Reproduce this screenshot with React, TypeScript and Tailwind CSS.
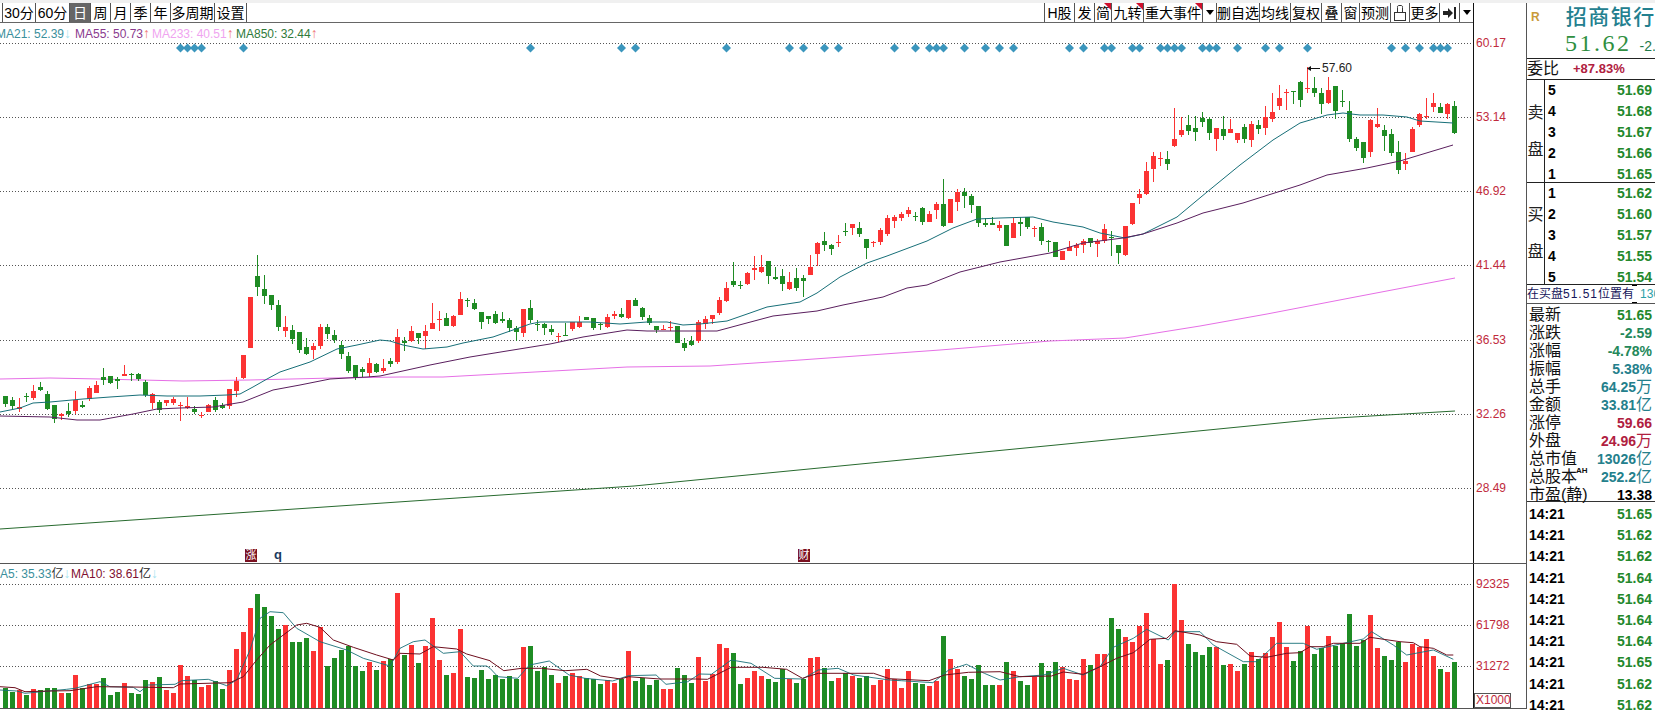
import React from 'react';

type Candle = [string, number, number, number, number];
type Pt = [number, number];

const RED = '#fb3333';
const GREEN = '#1f8c24';

// body top, body bottom, high, low, read off the screen in 3x pixels
const seg0: Candle[] = [
  ['g',168,192,168,200],['g',180,197,172,208],['r',202,208,175,215],['g',167,172,160,185],['r',153,173,135,180],
  ['g',140,150,126,153],['g',162,208,153,210],['g',195,236,195,248],['r',222,228,218,240],['g',213,222,190,230],
  ['r',179,213,153,222],['g',196,200,183,205],['r',144,178,138,182],['r',135,158,124,160],['g',111,120,84,135],
  ['g',108,130,108,131],['g',118,122,110,146],['r',102,107,75,107],['g',103,106,98,122],['g',102,117,100,124],
  ['g',125,165,120,172],['r',162,188,160,207],['g',185,210,180,218],['r',181,188,180,198],['r',176,189,170,195],
  ['r',195,198,185,242],['r',199,203,170,208],['g',206,215,198,222],['r',224,228,215,235],['r',195,215,192,216],
  ['g',180,210,172,215],['g',195,204,190,208],['r',148,198,148,208],['r',122,152,112,172],
];
const seg1: Candle[] = [
  ['r',315,385,315,388],['r',140,294,140,294],['g',78,110,15,137],['g',117,137,75,162],['g',134,165,134,180],
  ['g',165,230,150,242],['r',231,243,198,262],['g',240,267,225,282],['g',245,300,245,308],['g',292,312,265,316],
  ['r',288,299,280,328],['r',231,288,223,296],['g',232,252,222,268],['g',255,270,240,280],['g',285,312,272,328],
  ['g',318,362,305,370],['g',345,381,345,390],['g',358,365,350,380],['r',339,370,325,380],['g',342,366,338,368],
  ['r',354,363,327,370],['g',332,342,325,350],['r',262,336,238,342],['g',272,278,262,302],['r',244,272,228,276],
  ['g',250,263,250,282],['r',243,258,225,298],['r',219,236,160,238],['r',207,209,184,242],['g',205,227,190,228],
  ['r',198,228,195,230],['r',148,194,127,194],['g',150,153,145,170],['g',160,178,148,180],['g',187,217,187,237],
  ['g',199,206,197,222],['g',192,219,184,222],['g',208,214,186,218],['g',211,233,205,245],['g',235,247,228,272],
  ['r',178,250,178,262],['g',175,209,151,218],['g',222,224,210,243],['g',222,233,218,254],['g',238,245,226,256],
  ['r',257,260,250,275],['g',256,258,218,258],['r',217,236,215,242],['r',216,230,198,234],['g',202,209,201,210],
  ['g',204,233,203,240],['g',222,226,218,240],['r',202,231,193,233],['r',193,197,183,207],['g',192,202,175,205],
  ['r',151,204,151,207],['g',149,167,145,168],['g',174,201,170,210],['g',205,218,195,225],['g',229,240,228,248],
  ['r',238,240,226,240],['r',231,234,213,243],['g',228,278,228,280],['g',279,293,265,302],['g',274,285,257,288],
  ['r',216,273,210,278],
];
const seg2: Candle[] = [
  ['r',447,463,437,477],['r',434,447,434,462],['r',390,430,382,435],['r',354,392,336,395],['g',334,345,277,350],
  ['g',346,348,332,357],['r',309,342,305,345],['r',295,299,258,330],['r',292,305,255,310],['g',274,317,274,342],
  ['g',320,326,292,330],['g',319,341,298,362],['r',337,357,307,360],['g',325,354,294,362],['g',324,332,315,380],
  ['r',291,315,255,315],['r',219,251,215,287],['g',214,224,186,242],['g',225,236,222,254],['r',215,218,195,232],
  ['g',183,185,160,197],['r',163,173,162,194],['g',174,191,156,200],['g',208,234,208,266],['r',215,217,212,230],
  ['r',181,216,175,224],['r',144,192,136,197],['r',141,152,135,173],['r',132,145,125,152],['r',120,132,112,140],
  ['g',137,140,125,152],['g',114,156,112,166],['r',132,155,122,156],['r',102,120,97,146],['g',102,168,28,172],
  ['r',87,159,87,160],['r',65,95,57,122],['g',66,77,55,113],['g',78,104,72,128],['g',108,158,108,172],
  ['g',159,164,143,172],['g',160,164,140,165],['r',165,174,152,182],['g',165,228,165,228],['r',159,204,145,204],
  ['g',157,161,140,197],['g',142,170,142,178],['r',174,177,168,202],['g',171,213,160,225],['g',213,217,210,245],
  ['g',217,262,217,262],['r',244,270,244,270],['r',232,243,212,243],['r',226,233,220,258],['r',214,224,206,248],
  ['g',205,220,205,232],['r',214,221,208,262],['r',177,213,163,220],['g',200,205,183,258],['g',226,248,226,282],
];
const seg3: Candle[] = [
  ['r',498,585,498,587],['r',428,492,428,495],['r',402,413,388,432],['r',333,403,305,405],['r',288,328,277,366],
  ['r',295,298,277,318],['g',297,311,272,330],['r',237,258,144,260],['r',210,224,172,232],['g',195,213,166,224],
  ['g',204,215,168,242],['g',173,185,156,200],['g',178,218,172,240],['r',205,236,205,272],['g',207,228,168,240],
  ['r',207,218,176,218],['r',218,240,218,248],['g',201,236,192,248],['r',193,240,184,260],['g',195,207,180,222],
  ['r',171,203,138,224],['r',156,177,100,186],['r',114,137,75,150],['r',96,99,88,150],['g',94,97,93,132],
  ['g',65,119,64,140],['r',84,87,22,98],['g',84,98,52,110],['g',99,132,85,162],['r',90,130,52,132],
  ['g',78,152,78,176],['g',124,126,90,140],['g',154,236,124,245],['g',238,263,232,274],['g',247,294,245,310],
  ['r',180,276,178,290],['r',192,200,144,205],['g',210,227,195,272],['g',222,278,208,288],['g',276,330,243,342],
  ['r',303,311,278,330],['r',206,275,200,275],['r',161,194,159,200],['r',169,172,114,178],['r',129,142,98,155],
  ['g',141,158,130,160],['r',131,162,130,176],['g',138,218,123,222],
];

const toReal = (list: Candle[], base: number): Candle[] =>
  list.map(([c, a, b, h, l]) => [c, base + a / 3, base + b / 3, base + h / 3, base + l / 3]);
const candles: Candle[] = [...toReal(seg0, 340), ...toReal(seg1, 250), ...toReal(seg2, 170), ...toReal(seg3, 60)];

const ma21: Pt[] = [[0,412],[20,408],[33,403],[50,402],[83,399],[110,397],[140,395],[167,396],[200,396],[227,395],[240,394],[253,387],[267,379],[280,372],[310,362],[337,349],[357,345],[380,340],[390,341],[403,345],[423,349],[447,347],[463,343],[493,337],[513,330],[530,324],[540,322],[590,322],[620,324],[647,322],[667,322],[683,325],[700,324],[727,321],[750,313],[767,307],[800,302],[817,293],[840,277],[867,263],[887,256],[927,241],[953,228],[977,219],[1000,218],[1033,217],[1053,222],[1083,227],[1100,233],[1125,238],[1143,234],[1177,217],[1207,192],[1240,165],[1273,140],[1300,123],[1327,115],[1343,113],[1360,115],[1383,115],[1407,117],[1420,121],[1453,123]];
const ma55: Pt[] = [[0,416],[50,417],[77,420],[100,420],[133,414],[157,409],[180,408],[213,407],[243,402],[273,390],[300,385],[330,379],[347,378],[367,377],[380,376],[430,365],[470,357],[513,350],[550,344],[583,337],[627,330],[647,331],[717,331],[743,324],[773,316],[817,311],[843,305],[883,297],[907,288],[927,285],[960,272],[1000,262],[1050,253],[1083,243],[1123,238],[1143,234],[1177,223],[1203,213],[1243,203],[1300,185],[1327,175],[1367,168],[1400,161],[1433,151],[1453,145]];
const ma233: Pt[] = [[0,379],[50,378],[100,379],[183,381],[250,380],[333,378],[400,377],[443,377],[627,367],[710,366],[800,360],[940,350],[1050,341],[1125,338],[1200,326],[1267,314],[1350,298],[1455,278]];
const ma850: Pt[] = [[0,529],[634,486],[1056,445],[1320,419],[1455,411]];

// volume tops, same 3x reading
const volA: [string, number][] = [['g',445],['g',455],['r',450],['g',465],['r',447],['g',450],['g',444],['g',444],['r',458],['g',458],['r',405],['g',445],['r',432],['r',432],['g',414],['g',465],['g',456],['r',429],['g',458],['g',462],['g',420],['r',426],['g',411],['r',450],['r',458],['r',375],['r',408],['g',420],['r',441],['r',435],['g',423],['g',447],['r',390],['r',327],['r',276],['r',204],['g',162],['g',201],['g',228],['g',267],['r',255],['g',306],['g',306],['g',294],['r',333],['r',262],['g',378],['g',354],['g',330],['g',318],['g',378],['g',393],['r',366],['g',390],['r',363],['g',357],['r',159],['g',345],['r',315],['g',369],['r',318],['r',234],['r',360],['g',405],['r',399],['r',267],['g',411],['g',414],['g',390],['g',417]];
const volB: [string, number][] = [['g',285],['g',297],['g',288],['g',297],['r',201],['g',198],['g',273],['g',261],['g',285],['r',309],['g',288],['r',279],['r',288],['g',294],['g',297],['g',312],['r',300],['r',309],['g',297],['r',213],['g',303],['g',294],['g',315],['g',300],['r',327],['r',327],['g',264],['g',285],['g',309],['r',231],['r',303],['r',282],['r',192],['r',204],['g',219],['g',312],['r',294],['r',273],['r',288],['g',297],['g',306],['g',267],['r',297],['g',309],['g',297],['r',234],['r',231],['g',264],['g',303],['r',294],['g',279],['r',288],['g',294],['g',288],['r',315],['r',299],['r',267],['r',296],['r',324],['r',273],['g',309],['g',312],['r',318],['r',303],['g',168],['r',237],['r',267],['g',288],['g',297],['g',255],['g',315],['g',315],['r',315],['g',246],['r',273],['g',303],['g',315],['r',291],['g',249],['g',273],['g',246],['r',261],['r',297],['r',300],['r',237],['g',255],['r',222]];
const volC: [string, number][] = [['r',282],['g',174],['g',207],['r',231],['r',246],['r',198],['r',159],['r',236],['r',312],['g',300],['r',72],['r',180],['g',252],['g',276],['g',285],['g',261],['r',261],['g',315],['r',312],['r',333],['g',312],['r',276],['g',297],['r',279],['r',231],['r',186],['r',261],['g',303],['g',273],['r',198],['g',282],['g',264],['r',228],['g',258],['g',249],['g',162],['g',258],['g',240],['r',165],['r',264],['g',288],['g',300],['g',246],['r',306],['r',252],['r',261],['r',237],['r',288],['g',327],['r',336],['g',306]];
const volumes: [string, number][] = [
  ...volA.map(([c, v]): [string, number] => [c, 540 + v / 3]),
  ...volB.map(([c, v]): [string, number] => [c, 580 + v / 3]),
  ...volC.map(([c, v]): [string, number] => [c, 560 + v / 3]),
];

const fromZoom = (pts: Pt[], ox: number, oy: number, sx = 3): Pt[] => pts.map(([x, y]) => [ox + x / sx, oy + y / 3]);

const volMa10: Pt[] = [
  ...fromZoom([[0,440],[45,443],[75,455],[150,453],[210,452],[290,440],[400,441],[520,443],[540,432],[690,428],[730,410],[770,360],[810,315],[850,285],[890,255],[920,250],[960,262],[1000,300],[1060,322],[1130,345],[1180,360],[1200,340],[1260,342],[1300,320],[1370,327],[1400,342],[1470,362]], 0, 540),
  ...fromZoom([[0,243],[35,272],[80,265],[130,265],[190,272],[245,268],[280,288],[330,297],[350,290],[430,297],[520,297],[550,298],[610,262],[690,262],[750,268],[790,295],[830,280],[970,280],[1010,296],[1110,302],[1150,285],[1210,277],[1290,275],[1340,290],[1420,288],[1450,276],[1500,283]], 490, 580, 2.529),
  ...fromZoom([[0,320],[50,295],[100,278],[150,238],[200,235],[225,212],[300,225],[350,245],[410,253],[450,288],[500,292],[560,280],[600,278],[630,260],[670,260],[700,250],[780,250],[810,232],[900,245],[940,248],[960,260],[1000,265],[1040,285],[1060,285]], 1100, 560),
];
const volMa5: Pt[] = [
  ...fromZoom([[0,450],[50,453],[75,460],[200,448],[225,445],[300,425],[330,440],[400,442],[420,455],[445,435],[525,433],[545,422],[625,418],[680,437],[710,420],[750,330],[780,235],[810,215],[850,218],[890,265],[960,305],[1040,330],[1090,355],[1170,378],[1200,325],[1240,305],[1275,300],[1330,340],[1380,335],[1420,378],[1460,378]], 0, 540),
  ...fromZoom([[0,265],[20,290],[70,295],[100,255],[150,243],[200,285],[240,295],[310,303],[350,287],[420,285],[445,313],[500,305],[530,282],[560,283],[610,240],[660,250],[720,295],[790,297],[830,270],[880,265],[920,285],[1010,300],[1040,302],[1120,308],[1160,270],[1205,253],[1250,280],[1290,300],[1340,290],[1400,285],[1450,265],[1500,285]], 490, 580, 2.529),
  ...fromZoom([[0,320],[40,262],[100,235],[140,208],[205,240],[225,215],[300,215],[340,255],[430,305],[470,305],[530,250],[610,250],[650,268],[730,250],[790,237],[815,215],[880,255],[920,285],[1000,270],[1060,298]], 1100, 560),
];

const signalBars = [25,26,27,28,34,75,88,90,103,112,114,117,119,127,130,132,133,134,137,140,142,144,152,154,157,158,161,162,165,166,167,168,171,172,173,176,180,182,186,198,200,202,204,205,206];
const priceGrid = [43, 117, 191, 265, 340, 414, 488];
const priceLabels = ['60.17', '53.14', '46.92', '41.44', '36.53', '32.26', '28.49'];
const volGrid = [584, 625, 666];
const volLabels = ['92325', '61798', '31272'];

const barX = (k: number) => 5 + 7 * k;
const line = (pts: Pt[]) => pts.map(([x, y]) => `${x.toFixed(1)},${y.toFixed(1)}`).join(' ');

function Corner() {
  return <span className="absolute top-0 right-0 w-0 h-0 border-l-[7px] border-l-transparent border-t-[7px] border-t-[#d0102c]" />;
}

function Caret() {
  return <span className="w-0 h-0 border-x-[4px] border-x-transparent border-t-[5px] border-t-black" />;
}

function ToolBtn({ w, children, active }: { w: string; children: React.ReactNode; active?: boolean }) {
  return (
    <div className={`relative flex items-center justify-center border-l border-[#555] ${w} ${active ? 'bg-[#666] text-white' : 'text-black'}`}>
      {children}
    </div>
  );
}

function Toolbar() {
  return (
    <div className="flex justify-between h-[20px] border-b border-[#666] text-[14px] leading-none">
      <div className="flex ml-[2px]">
        <ToolBtn w="w-[33px]">30分</ToolBtn>
        <ToolBtn w="w-[34px]">60分</ToolBtn>
        <ToolBtn w="w-[21px]" active>日</ToolBtn>
        <ToolBtn w="w-[20px]">周</ToolBtn>
        <ToolBtn w="w-[20px]">月</ToolBtn>
        <ToolBtn w="w-[20px]">季</ToolBtn>
        <ToolBtn w="w-[20px]">年</ToolBtn>
        <ToolBtn w="w-[44px]">多周期</ToolBtn>
        <ToolBtn w="w-[32px]">设置</ToolBtn>
        <div className="border-l border-[#555]" />
      </div>
      <div className="flex">
        <ToolBtn w="w-[30px]">H股</ToolBtn>
        <ToolBtn w="w-[20px]">发</ToolBtn>
        <ToolBtn w="w-[17px]">简<Corner /></ToolBtn>
        <ToolBtn w="w-[32px]">九转<Corner /></ToolBtn>
        <ToolBtn w="w-[59px]">重大事件<Corner /></ToolBtn>
        <ToolBtn w="w-[14px]"><Caret /></ToolBtn>
        <ToolBtn w="w-[43px]">删自选</ToolBtn>
        <ToolBtn w="w-[31px]">均线</ToolBtn>
        <ToolBtn w="w-[31px]">复权</ToolBtn>
        <ToolBtn w="w-[20px]">叠</ToolBtn>
        <ToolBtn w="w-[18px]">窗</ToolBtn>
        <ToolBtn w="w-[31px]">预测</ToolBtn>
        <ToolBtn w="w-[19px]">
          <svg width="12" height="16" viewBox="0 0 12 16" fill="none" stroke="#333" strokeWidth="1">
            <rect x="0.5" y="7.5" width="11" height="8" />
            <path d="M3.5 7.5V2.5a1.5 1.5 0 0 1 1.5-2h2a1.5 1.5 0 0 1 1.5 2v5" />
          </svg>
        </ToolBtn>
        <ToolBtn w="w-[30px]">更多</ToolBtn>
        <ToolBtn w="w-[20px]">
          <svg width="13" height="12" viewBox="0 0 13 12" fill="#222">
            <path d="M0 4h5V1l5 5-5 5V8H0z" />
            <rect x="11" y="0" width="2" height="12" />
          </svg>
        </ToolBtn>
        <ToolBtn w="w-[14px]"><Caret /></ToolBtn>
      </div>
    </div>
  );
}

function PriceChart() {
  return (
    <svg width="1473" height="540" viewBox="0 23 1473 540" className="block">
      {priceGrid.map((y) => (
        <line key={y} x1="0" x2="1473" y1={y + 0.5} y2={y + 0.5} stroke="#555" strokeDasharray="1 2" />
      ))}
      <polyline points={line(ma850)} fill="none" stroke="#276a2e" />
      <polyline points={line(ma233)} fill="none" stroke="#e66fe6" />
      {candles.map(([c, t, b, h, l], k) => {
        const fill = c === 'r' ? RED : GREEN;
        const top = Math.round(t);
        return (
          <g key={k} fill={fill} shapeRendering="crispEdges">
            <rect x={barX(k)} y={Math.round(h)} width="1" height={Math.max(1, Math.round(l) - Math.round(h))} />
            <rect x={barX(k) - 2} y={top} width="5" height={Math.max(1, Math.round(b) - top)} />
          </g>
        );
      })}
      <polyline points={line(ma21)} fill="none" stroke="#176f78" />
      <polyline points={line(ma55)} fill="none" stroke="#5a1f5e" />
      {signalBars.map((k) => (
        <path key={k} d={`M${barX(k) + 0.5} 43.5l4.5 4.5-4.5 4.5-4.5-4.5z`} fill="#3b96bd" />
      ))}
      <path d="M1308 68.5h12" stroke="#111" />
      <path d="M1307 68.5l4-2.5v5z" fill="#111" />
    </svg>
  );
}

function VolumeChart() {
  return (
    <svg width="1473" height="144" viewBox="0 564 1473 144" className="block">
      {volGrid.map((y) => (
        <line key={y} x1="0" x2="1473" y1={y + 0.5} y2={y + 0.5} stroke="#555" strokeDasharray="1 2" />
      ))}
      {volumes.map(([c, y], k) => (
        <rect key={k} x={barX(k) - 2} y={Math.round(y)} width="5" height={708 - Math.round(y)} fill={c === 'r' ? RED : GREEN} shapeRendering="crispEdges" />
      ))}
      <polyline points={line(volMa5)} fill="none" stroke="#176f78" strokeWidth="0.9" />
      <polyline points={line(volMa10)} fill="none" stroke="#6e0f1e" strokeWidth="1" />
    </svg>
  );
}

function AxisLabels({ ys, labels, top }: { ys: number[]; labels: string[]; top: number }) {
  return (
    <>
      {labels.map((t, i) => (
        <span key={t} className="absolute left-[2px] text-[12px] leading-[14px] text-[#c02a3c]" style={{ top: ys[i] - top - 7 }}>
          {t}
        </span>
      ))}
    </>
  );
}

const rowsSell = ['51.69', '51.68', '51.67', '51.66', '51.65'];
const rowsBuy = ['51.62', '51.60', '51.57', '51.55', '51.54'];
const trades = ['51.65', '51.62', '51.62', '51.64', '51.64', '51.64', '51.64', '51.65', '51.62', '51.62'];

function QuoteBlock({ a, b, nums, vals, h }: { a: string; b: string; nums: string[]; vals: string[]; h: string }) {
  return (
    <div className={`flex shrink-0 border-b border-[#222] ${h}`}>
      <div className="w-[18px] border-r border-[#222] flex flex-col items-center justify-center gap-[21px] text-[16px] leading-[16px] text-[#222]">
        <span>{a}</span>
        <span>{b}</span>
      </div>
      <div className="flex-1 flex flex-col pl-[3px] pr-[3px] text-[14px] font-bold">
        {nums.map((n, i) => (
          <div key={n} className="flex-1 flex items-center justify-between">
            <span className="text-black">{n}</span>
            <span className="text-[#24882c]">{vals[i]}</span>
          </div>
        ))}
      </div>
    </div>
  );
}

function Stat({ label, value, unit, color, sup }: { label: React.ReactNode; value: string; unit?: string; color: string; sup?: boolean }) {
  return (
    <div className="h-[18px] flex items-center justify-between pl-[2px] pr-[3px]">
      <span className="relative text-[16px] leading-[18px] text-[#111]">
        {label}
        {sup && <span className="absolute left-[47px] -top-[2px] text-[8px] leading-[10px] font-bold">AH</span>}
      </span>
      <span className={`text-[14px] font-bold leading-[18px] ${color}`}>
        {value}
        {unit && <span className="text-[16px] font-normal">{unit}</span>}
      </span>
    </div>
  );
}

function RightPanel() {
  return (
    <div className="w-[128px] shrink-0 overflow-hidden flex flex-col">
      <div className="h-[56px] shrink-0 border-b border-[#222] relative whitespace-nowrap">
        <div className="flex items-center h-[28px]">
          <span className="ml-[4px] text-[12px] font-bold text-[#c89a3a]">R</span>
          <span className="ml-[26px] text-[21px] leading-[26px] tracking-[1.5px] font-medium text-[#23808f]">招商银行</span>
        </div>
        <div className="flex items-baseline">
          <span className="ml-[38px] text-[24px] leading-[24px] tracking-[2.5px] text-[#2f8f40] font-['Liberation_Serif','serif']">51.62</span>
          <span className="ml-[8px] text-[14px] leading-[20px] text-[#1f7a4a]">-2.59</span>
        </div>
      </div>
      <div className="h-[21px] shrink-0 border-b border-[#222] flex items-center whitespace-nowrap">
        <span className="text-[16px] text-[#111] leading-[20px]">委比</span>
        <span className="ml-[14px] text-[13px] font-bold text-[#b02040]">+87.83%</span>
      </div>
      <QuoteBlock a="卖" b="盘" nums={['5', '4', '3', '2', '1']} vals={rowsSell} h="h-[103px]" />
      <QuoteBlock a="买" b="盘" nums={['1', '2', '3', '4', '5']} vals={rowsBuy} h="h-[102px]" />
      <div className="relative h-[19px] shrink-0 border-b border-[#555] flex items-center whitespace-nowrap text-[12px] text-[#14145a]">
        在买盘<span className="tracking-[1px]">51.51</span>位置有
        <span className="ml-[6px] text-[#2aa0a8]">1300</span>
        <span className="absolute left-[105px] top-0 w-[5px] h-[1px] bg-black" />
        <span className="absolute left-[105px] bottom-0 w-[5px] h-[1px] bg-black" />
      </div>
      <div className="h-[198px] shrink-0 pt-[2px] border-b border-[#333]">
        <Stat label="最新" value="51.65" color="text-[#24882c]" />
        <Stat label="涨跌" value="-2.59" color="text-[#24885a]" />
        <Stat label="涨幅" value="-4.78%" color="text-[#24885a]" />
        <Stat label="振幅" value="5.38%" color="text-[#24808c]" />
        <Stat label="总手" value="64.25" unit="万" color="text-[#24808c]" />
        <Stat label="金额" value="33.81" unit="亿" color="text-[#24808c]" />
        <Stat label="涨停" value="59.66" color="text-[#b02040]" />
        <Stat label="外盘" value="24.96" unit="万" color="text-[#b02040]" />
        <Stat label="总市值" value="13026" unit="亿" color="text-[#24808c]" />
        <Stat label="总股本" value="252.2" unit="亿" color="text-[#24808c]" sup />
        <Stat label="市盈(静)" value="13.38" color="text-black" />
      </div>
      <div className="pt-[2px]">
        {trades.map((p, i) => (
          <div key={i} className="h-[21.2px] flex items-center justify-between pl-[2px] pr-[3px] font-bold">
            <span className="text-[14px] text-black">14:21</span>
            <span className="text-[14px] text-[#24882c]">{p}</span>
          </div>
        ))}
      </div>
    </div>
  );
}

export default function App() {
  return (
    <div className="w-[1655px] h-[710px] overflow-hidden bg-white flex flex-col font-['Liberation_Sans','Noto_Sans_CJK_SC',sans-serif]">
      <div className="h-[3px] bg-[#f0f0f0] shrink-0" />
      <div className="flex flex-1 min-h-0">
        <div className="w-[1527px] shrink-0 border-r border-[#555] h-[706px]">
          <div className="flex h-[561px] border-b border-[#555]">
            <div className="w-[1473px]">
              <Toolbar />
              <div className="relative">
                <PriceChart />
                <div className="absolute top-[3px] -left-[4px] flex items-center h-[14px] text-[12px] leading-[14px] whitespace-nowrap">
                  <span className="w-[79px] text-[#3a8f9c]">MA21: 52.39<span className="text-[14px] leading-[14px] text-[#a8e4f0]">↓</span></span>
                  <span className="w-[77px] text-[#8a3a8e]">MA55: 50.73<span className="text-[14px] leading-[14px] text-[#f07a7a]">↑</span></span>
                  <span className="w-[84px] text-[#f0a4f0]">MA233: 40.51<span className="text-[14px] leading-[14px] text-[#f07a7a]">↑</span></span>
                  <span className="text-[#2f7a3a]">MA850: 32.44<span className="text-[14px] leading-[14px] text-[#f07a7a]">↑</span></span>
                </div>
                <span className="absolute left-[1322px] top-[38px] text-[12px] leading-[14px] text-[#222]">57.60</span>
                <span className="absolute left-[245px] top-[526px] w-[12px] h-[13px] bg-[#7a1020] text-white text-[11px] leading-[13px] text-center">涨</span>
                <span className="absolute left-[274px] top-[525px] text-[13px] leading-[14px] font-bold text-[#1a3a60]">q</span>
                <span className="absolute left-[798px] top-[526px] w-[12px] h-[13px] bg-[#7a1020] text-white text-[11px] leading-[13px] text-center">财</span>
              </div>
            </div>
            <div className="relative flex-1 border-l border-[#111]">
              <AxisLabels ys={priceGrid} labels={priceLabels} top={3} />
            </div>
          </div>
          <div className="flex h-[145px] border-b border-[#555]">
            <div className="relative w-[1473px] overflow-hidden">
              <VolumeChart />
              <div className="absolute top-[2px] left-0 flex text-[12px] leading-[14px] whitespace-nowrap">
                <span className="w-[71px] text-[#3a8f9c]">A5: 35.33<span className="text-[#333]">亿</span><span className="text-[14px] leading-[14px] text-[#a8e4f0]">↓</span></span>
                <span className="text-[#801030]">MA10: 38.61<span className="text-[#222]">亿</span><span className="text-[14px] leading-[14px] text-[#a8e4f0]">↓</span></span>
              </div>
            </div>
            <div className="relative flex-1 border-l border-[#111]">
              <AxisLabels ys={volGrid} labels={volLabels} top={564} />
              <span className="absolute left-0 top-[129px] w-[37px] h-[15px] border border-[#555] text-[12px] leading-[13px] text-[#c02a3c] pl-[1px]">X1000</span>
            </div>
          </div>
        </div>
        <RightPanel />
      </div>
    </div>
  );
}
